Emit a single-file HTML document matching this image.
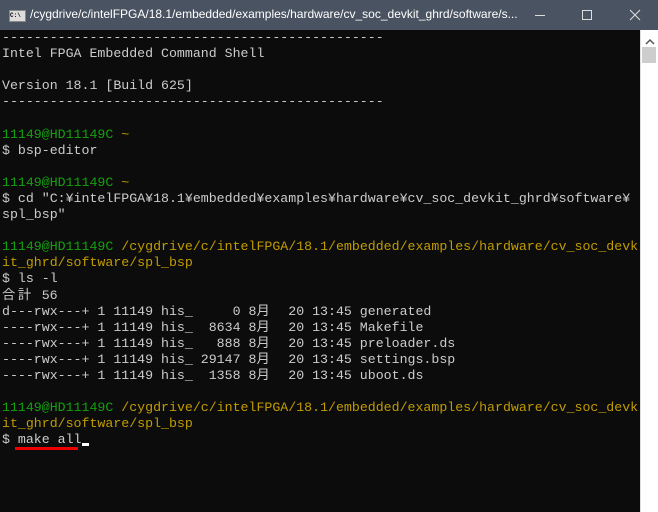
<!DOCTYPE html>
<html><head><meta charset="utf-8"><style>
body{margin:0;width:658px;height:512px;overflow:hidden;background:#0c0c0c;position:relative;font-family:"Liberation Sans",sans-serif}
#tb{position:absolute;left:0;top:0;width:658px;height:30px;background:#4a5361;color:#fff;font-size:12px}
#tb .t{position:absolute;left:30px;top:7px;white-space:nowrap}
#tb .ic{position:absolute;left:9px;top:10px;width:15px;height:10px;background:#ddd;border:1px solid #888;font:bold 6px "Liberation Mono",monospace;color:#000;line-height:10px}
#term{position:absolute;left:2px;top:30px;font-family:"Liberation Mono","Noto Sans CJK JP",monospace;font-size:13.25px;line-height:16.1px;color:#cccccc;white-space:pre}
.g{color:#13a10e}.y{color:#c19c00}
.j{display:inline-block;width:15.9px}
#sb{position:absolute;left:640px;top:30px;width:18px;height:482px;background:#fff;border-left:1px solid #ddd}
#th{position:absolute;left:642px;top:47px;width:14px;height:16px;background:#cdcdcd}
</style></head><body>
<div id="tb"><div class="ic">C:\</div><div class="t">/cygdrive/c/intelFPGA/18.1/embedded/examples/hardware/cv_soc_devkit_ghrd/software/s...</div>
<svg style="position:absolute;left:530px;top:8px" width="120" height="16"><line x1="5" y1="7.5" x2="15" y2="7.5" stroke="#ddd"/><rect x="52.5" y="2.5" width="9" height="9" fill="none" stroke="#ddd"/><path d="M100 2L110 12M110 2L100 12" stroke="#ddd"/></svg></div>
<div id="term">------------------------------------------------
Intel FPGA Embedded Command Shell

Version 18.1 [Build 625]
------------------------------------------------

<span class="g">11149@HD11149C</span> <span class="y">~</span>
$ bsp-editor

<span class="g">11149@HD11149C</span> <span class="y">~</span>
$ cd "C:¥intelFPGA¥18.1¥embedded¥examples¥hardware¥cv_soc_devkit_ghrd¥software¥
spl_bsp"

<span class="g">11149@HD11149C</span> <span class="y">/cygdrive/c/intelFPGA/18.1/embedded/examples/hardware/cv_soc_devk
it_ghrd/software/spl_bsp</span>
$ ls -l
<span class="j">合</span><span class="j">計</span> 56
d---rwx---+ 1 11149 his_     0 8<span class="j">月</span>  20 13:45 generated
----rwx---+ 1 11149 his_  8634 8<span class="j">月</span>  20 13:45 Makefile
----rwx---+ 1 11149 his_   888 8<span class="j">月</span>  20 13:45 preloader.ds
----rwx---+ 1 11149 his_ 29147 8<span class="j">月</span>  20 13:45 settings.bsp
----rwx---+ 1 11149 his_  1358 8<span class="j">月</span>  20 13:45 uboot.ds

<span class="g">11149@HD11149C</span> <span class="y">/cygdrive/c/intelFPGA/18.1/embedded/examples/hardware/cv_soc_devk
it_ghrd/software/spl_bsp</span>
$ make all</div>
<div style="position:absolute;left:82px;top:443px;width:7px;height:3px;background:#fff"></div>
<div style="position:absolute;left:15px;top:447px;width:63px;height:3px;background:#e00"></div>
<div id="sb"><svg width="18" height="14" style="position:absolute;top:5px"><path d="M5 9L9 5L13 9" stroke="#555" stroke-width="1.5" fill="none"/></svg></div>
<div id="th"></div>
</body></html>
